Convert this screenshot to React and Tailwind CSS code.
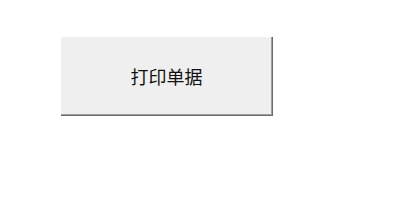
import React from 'react';

export default function App() {
  return (
    <div className="w-[416px] h-[205px] bg-white pt-[37px] pl-[61px]">
      <button
        className="w-[212px] h-[79px] bg-[#efefef] border-r border-b border-[#6b6b6b] shadow-[inset_-1px_-1px_0_#a0a0a0] flex items-center justify-center text-[18px] text-[#111]"
        style={{ fontFamily: '"Noto Sans CJK SC", sans-serif' }}
      >
        打印单据
      </button>
    </div>
  );
}
